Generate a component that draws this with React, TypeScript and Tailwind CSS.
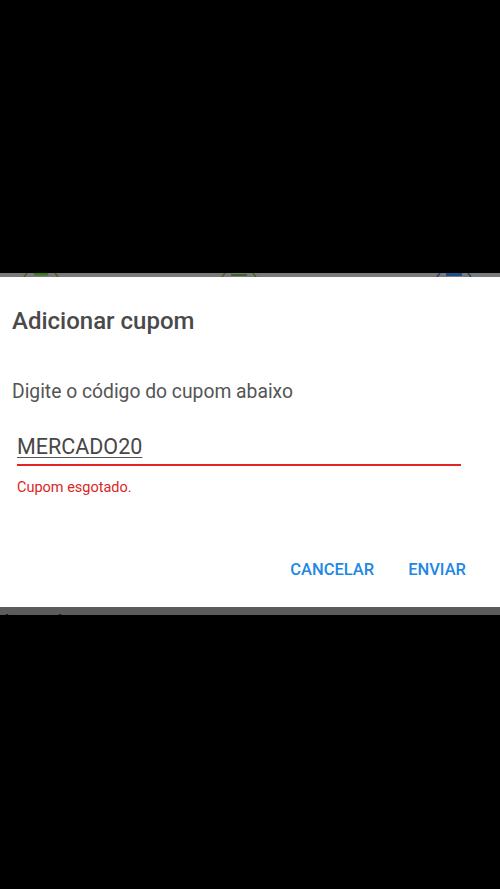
export default function App() {
  return (
    <div
      className="flex h-[889px] w-[500px] flex-col overflow-hidden bg-black"
      style={{ fontFamily: "Roboto, 'Noto Sans', sans-serif" }}
    >
      <div className="h-[273px] shrink-0" />

      {/* dimmed app behind the dialog, top edge */}
      <div className="relative h-[4px] shrink-0 overflow-hidden bg-[#7a7a7a]">
        <div className="flex h-full items-start">
          <svg className="ml-[22px] h-[4px] w-[38px]" viewBox="0 0 38 4">
            <path d="M2 4 L5 0 M33 0 L36 4" stroke="#3f6b1e" strokeWidth="1.5" />
            <rect x="12" y="0" width="14" height="2.5" fill="#3b7a19" />
          </svg>
          <svg className="ml-[160px] h-[4px] w-[38px]" viewBox="0 0 38 4">
            <path d="M2 4 L5 0 M33 0 L36 4" stroke="#3f6b1e" strokeWidth="1.5" />
            <rect x="11" y="1" width="16" height="2" fill="#3b6a20" />
          </svg>
          <svg className="ml-[177px] h-[4px] w-[38px]" viewBox="0 0 38 4">
            <path d="M2 4 L5 0 M33 0 L36 4" stroke="#23466e" strokeWidth="1.5" />
            <rect x="11" y="0" width="16" height="3" fill="#1e4f86" />
          </svg>
        </div>
      </div>

      {/* dialog */}
      <div className="flex h-[330px] shrink-0 flex-col bg-white pt-[30px]">
        <h2 className="pl-[12px] text-[24px] leading-[28px] font-medium text-[#4a4a4a]">
          Adicionar cupom
        </h2>

        <p className="mt-[45px] pl-[12px] text-[19.3px] leading-[24px] text-[#555555]">
          Digite o código do cupom abaixo
        </p>

        <div className="mt-[30px] ml-[17px] w-[444px] border-b-2 border-[#e32424] pb-[3px]">
          <span className="text-[21.5px] leading-[26px] text-[#474747] underline decoration-[#555555] decoration-1 underline-offset-[3px]">
            MERCADO20
          </span>
        </div>

        <p className="mt-[13px] pl-[17px] text-[14.5px] leading-[18px] text-[#d92626]">
          Cupom esgotado.
        </p>

        <div className="mt-[63px] flex justify-end gap-[34px] pr-[34px]">
          <button className="text-[16.5px] leading-[20px] font-medium text-[#1e88e5]">
            CANCELAR
          </button>
          <button className="text-[16.5px] leading-[20px] font-medium text-[#1e88e5]">
            ENVIAR
          </button>
        </div>
      </div>

      {/* dimmed app behind the dialog, bottom edge */}
      <div className="h-[8px] shrink-0 overflow-hidden bg-[#5c5c5c]">
        <p className="pt-[4px] text-[19px] leading-[22px] text-[#111111]">
          áreas de entrega
        </p>
      </div>

      <div className="flex-1" />
    </div>
  );
}
